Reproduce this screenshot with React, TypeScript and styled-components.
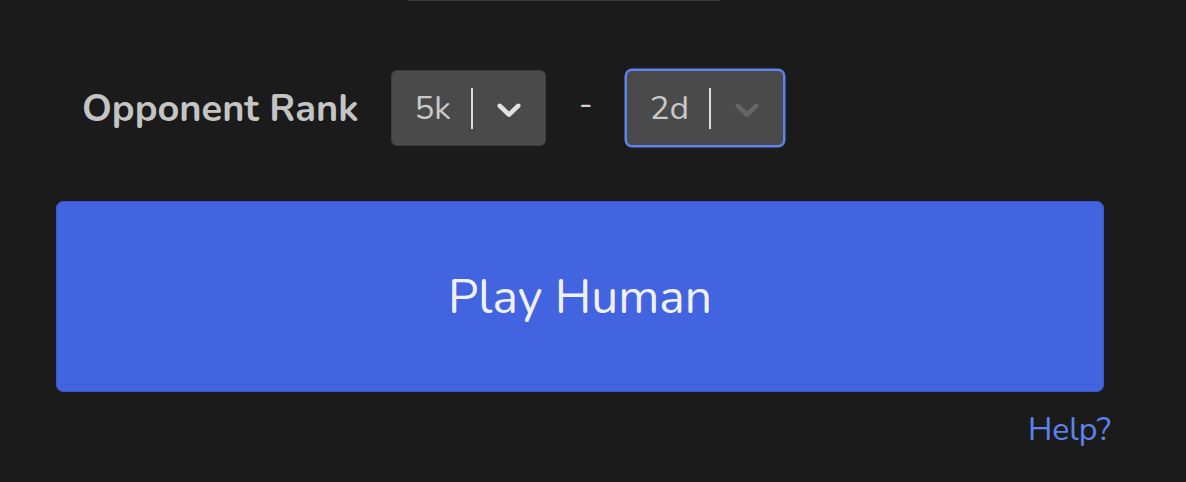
import styled, { createGlobalStyle } from "styled-components";

const GlobalStyle = createGlobalStyle`
  html, body {
    margin: 0;
    padding: 0;
    background: #1b1b1b;
    font-family: "Nunito", Lato, "Noto Sans", sans-serif;
    overflow: hidden;
  }
`;

const Page = styled.div`
  display: flex;
  flex-direction: column;
  width: 1048px;
  padding-left: 56px;
  height: 482px;
`;

const TopEdge = styled.div`
  margin-left: 351px;
  width: 313px;
  height: 1px;
  background: #3a3a3a;
  border-radius: 0 0 4px 4px;
`;

const RankRow = styled.div`
  display: flex;
  align-items: center;
  margin-top: 69px;
  padding-left: 26px;
  height: 76px;
`;

const Label = styled.span`
  font-size: 38px;
  font-weight: 700;
  color: #c4c4c4;
  margin-right: 32px;
`;

const SelectBox = styled.div<{ $focused?: boolean }>`
  box-sizing: border-box;
  display: flex;
  align-items: center;
  height: 76px;
  padding: 0 16px 0 23px;
  background: #4a4a4a;
  border: 1px solid ${(p) => (p.$focused ? "#5b84ef" : "#3e3e3e")};
  box-shadow: ${(p) => (p.$focused ? "0 0 0 1.5px #5b84ef" : "none")};
  border-radius: 6px;
`;

const Value = styled.span`
  font-size: 33px;
  color: #c9c9c9;
  margin-right: 20px;
`;

const Separator = styled.span`
  width: 2px;
  height: 41px;
  background: #dcdcdc;
  margin-right: 16px;
`;

const Chevron = styled.svg<{ $muted?: boolean }>`
  width: 40px;
  height: 40px;
  margin-top: 2px;
  fill: ${(p) => (p.$muted ? "#666666" : "#e2e2e2")};
`;

const Dash = styled.span`
  font-size: 33px;
  color: #cfcfcf;
  margin: -8px 33px 0;
`;

const PlayButton = styled.button`
  margin-top: 55px;
  height: 191px;
  width: 100%;
  background: #4364e0;
  border: 1.5px solid #3a58c8;
  border-radius: 7px;
  color: #f0f0f0;
  font-family: inherit;
  font-size: 48px;
  cursor: pointer;
`;

const HelpLink = styled.a`
  align-self: flex-end;
  margin-right: -7px;
  margin-top: 16px;
  font-size: 32px;
  color: #5d84ee;
  text-decoration: none;
`;

function RankSelect({ value, focused }: { value: string; focused?: boolean }) {
  return (
    <SelectBox $focused={focused}>
      <Value>{value}</Value>
      <Separator />
      <Chevron viewBox="0 0 20 20" $muted={focused}>
        <path d="M4.516 7.548c0.436-0.446 1.043-0.481 1.576 0l3.908 3.747 3.908-3.747c0.533-0.481 1.141-0.446 1.574 0 0.436 0.445 0.408 1.197 0 1.615-0.406 0.418-4.695 4.502-4.695 4.502-0.217 0.223-0.502 0.335-0.787 0.335s-0.57-0.112-0.789-0.335c0 0-4.287-4.084-4.695-4.502s-0.436-1.17 0-1.615z" />
      </Chevron>
    </SelectBox>
  );
}

export default function App() {
  return (
    <>
      <GlobalStyle />
      <Page>
        <TopEdge />
        <RankRow>
          <Label>Opponent Rank</Label>
          <RankSelect value="5k" />
          <Dash>-</Dash>
          <RankSelect value="2d" focused />
        </RankRow>
        <PlayButton>Play Human</PlayButton>
        <HelpLink href="#">Help?</HelpLink>
      </Page>
    </>
  );
}
